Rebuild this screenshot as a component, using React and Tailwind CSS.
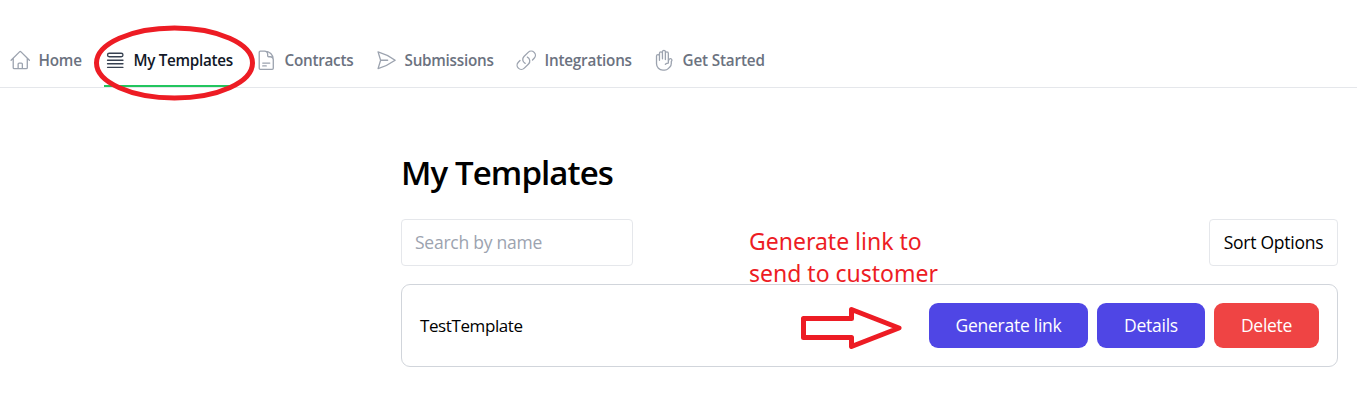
import {
  HiOutlineHome,
  HiOutlineQueueList,
  HiOutlineDocumentText,
  HiOutlinePaperAirplane,
  HiOutlineLink,
  HiOutlineHandRaised,
} from "react-icons/hi2";

const tabs = [
  { label: "Home", icon: HiOutlineHome, size: "w-[74px]", spacing: "tracking-[-0.2px]" },
  { label: "My Templates", icon: HiOutlineQueueList, size: "w-[130px]", spacing: "tracking-[-0.3px]", active: true },
  { label: "Contracts", icon: HiOutlineDocumentText, size: "w-[99px]", spacing: "tracking-[-0.25px]" },
  { label: "Submissions", icon: HiOutlinePaperAirplane, size: "w-[119px]", spacing: "tracking-[-0.25px]" },
  { label: "Integrations", icon: HiOutlineLink, size: "w-[117px]", spacing: "tracking-[-0.2px]" },
  { label: "Get Started", icon: HiOutlineHandRaised, size: "w-[112px]", spacing: "tracking-[-0.15px]" },
];

function Tab({ label, icon: Icon, size, spacing, active }) {
  return (
    <a
      className={`flex h-full shrink-0 items-center gap-[7px] border-b-2 pt-[35px] whitespace-nowrap ${size} ${
        active ? "border-[#22c55e] text-[#111827]" : "border-transparent text-[#6b7280]"
      }`}
    >
      <Icon strokeWidth={1.4} className={`size-[22.5px] shrink-0 ${active ? "text-[#374151]" : "text-[#9ca3af]"}`} />
      <span className={`text-[15.25px] leading-5 font-[580] ${spacing}`}>{label}</span>
    </a>
  );
}

export default function App() {
  return (
    <div className="relative h-[420px] w-[1357px] overflow-hidden bg-white font-['Open_Sans','Noto_Sans',sans-serif] text-black">
      <nav className="flex h-[88px] gap-[21px] border-b border-[#e5e7eb] pl-[9px]">
        {tabs.map((tab) => (
          <Tab key={tab.label} {...tab} />
        ))}
      </nav>

      <main className="ml-[401px] w-[937px] pt-[65px]">
        <h1 className="h-[40px] text-[33px] leading-[40px] font-[570] tracking-[-0.9px]">My Templates</h1>
        <div className="mt-[26px] flex h-[47px] justify-between">
          <input
            placeholder="Search by name"
            className="w-[232px] rounded border border-[#e5e7eb] px-[13px] text-[17.5px] tracking-[-0.25px] placeholder:text-[#9ca3af]"
          />
          <button className="w-[129px] rounded border border-[#e5e7eb] text-[17.5px] tracking-[-0.25px] whitespace-nowrap">
            Sort Options
          </button>
        </div>
        <section className="mt-[18px] flex h-[83px] items-center justify-between rounded-[9px] border border-[#d1d5db] px-[18px]">
          <span className="text-[17px] tracking-[-0.4px]">TestTemplate</span>
          <div className="flex gap-[9px] text-[17.5px] tracking-[-0.27px] text-white">
            <button className="h-[45px] w-[159px] rounded-[9px] bg-[#4f46e5]">Generate link</button>
            <button className="h-[45px] w-[108px] rounded-[9px] bg-[#4f46e5]">Details</button>
            <button className="h-[45px] w-[105px] rounded-[9px] bg-[#ef4444]">Delete</button>
          </div>
        </section>
      </main>

      <p className="absolute top-[225px] left-[749px] font-['Noto_Sans',sans-serif] text-[23px] leading-8 whitespace-nowrap text-[#ed1c24]">
        Generate link to
        <br />
        send to customer
      </p>
      <svg
        className="pointer-events-none absolute inset-0 size-full"
        viewBox="0 0 1357 420"
        fill="none"
        stroke="#ed1c24"
        strokeWidth="5"
      >
        <ellipse cx="174.5" cy="63" rx="78" ry="35" />
        <path d="M803.5 318.5H851.5V309.5L899 328L851.5 346.5V337.5H803.5Z" strokeWidth="5" strokeLinejoin="round" />
      </svg>
    </div>
  );
}
